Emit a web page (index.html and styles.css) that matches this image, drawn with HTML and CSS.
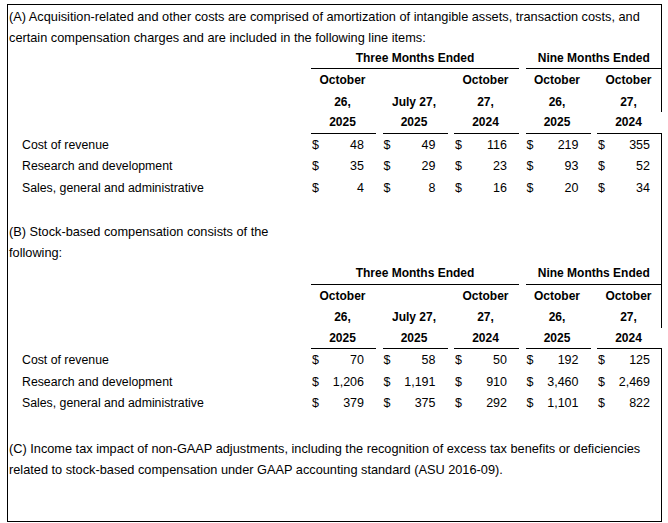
FILE: index.html
```html
<!DOCTYPE html>
<html lang="en">
<head>
<meta charset="utf-8">
<title>Non-GAAP notes</title>
<link rel="stylesheet" href="styles.css">
</head>
<body>
<div class="page">
  <div class="box">
    <p class="note note-a">(A) Acquisition-related and other costs are comprised of amortization of intangible assets, transaction costs, and<br>certain compensation charges and are included in the following line items:</p>

    <div class="fin">
      <div class="lbl"></div>
      <div class="period span3">Three Months Ended</div>
      <div class="period span2">Nine Months Ended</div>

      <div class="lbl"></div>
      <div class="hd">October</div><div class="hd"></div><div class="hd">October</div><div class="hd">October</div><div class="hd">October</div>
      <div class="lbl"></div>
      <div class="hd">26,</div><div class="hd">July 27,</div><div class="hd">27,</div><div class="hd">26,</div><div class="hd">27,</div>
      <div class="lbl"></div>
      <div class="hd yr">2025</div><div class="hd yr">2025</div><div class="hd yr">2024</div><div class="hd yr">2025</div><div class="hd yr last">2024</div>

      <div class="lbl item">Cost of revenue</div>
      <div class="v"><span>$</span><span>48</span></div><div class="v"><span>$</span><span>49</span></div><div class="v"><span>$</span><span>116</span></div><div class="v"><span>$</span><span>219</span></div><div class="v"><span>$</span><span>355</span></div>
      <div class="lbl item">Research and development</div>
      <div class="v"><span>$</span><span>35</span></div><div class="v"><span>$</span><span>29</span></div><div class="v"><span>$</span><span>23</span></div><div class="v"><span>$</span><span>93</span></div><div class="v"><span>$</span><span>52</span></div>
      <div class="lbl item">Sales, general and administrative</div>
      <div class="v"><span>$</span><span>4</span></div><div class="v"><span>$</span><span>8</span></div><div class="v"><span>$</span><span>16</span></div><div class="v"><span>$</span><span>20</span></div><div class="v"><span>$</span><span>34</span></div>
    </div>

    <p class="note note-b">(B) Stock-based compensation consists of the<br>following:</p>

    <div class="fin">
      <div class="lbl"></div>
      <div class="period span3">Three Months Ended</div>
      <div class="period span2">Nine Months Ended</div>

      <div class="lbl"></div>
      <div class="hd">October</div><div class="hd"></div><div class="hd">October</div><div class="hd">October</div><div class="hd">October</div>
      <div class="lbl"></div>
      <div class="hd">26,</div><div class="hd">July 27,</div><div class="hd">27,</div><div class="hd">26,</div><div class="hd">27,</div>
      <div class="lbl"></div>
      <div class="hd yr">2025</div><div class="hd yr">2025</div><div class="hd yr">2024</div><div class="hd yr">2025</div><div class="hd yr last">2024</div>

      <div class="lbl item">Cost of revenue</div>
      <div class="v"><span>$</span><span>70</span></div><div class="v"><span>$</span><span>58</span></div><div class="v"><span>$</span><span>50</span></div><div class="v"><span>$</span><span>192</span></div><div class="v"><span>$</span><span>125</span></div>
      <div class="lbl item">Research and development</div>
      <div class="v"><span>$</span><span>1,206</span></div><div class="v"><span>$</span><span>1,191</span></div><div class="v"><span>$</span><span>910</span></div><div class="v"><span>$</span><span>3,460</span></div><div class="v"><span>$</span><span>2,469</span></div>
      <div class="lbl item">Sales, general and administrative</div>
      <div class="v"><span>$</span><span>379</span></div><div class="v"><span>$</span><span>375</span></div><div class="v"><span>$</span><span>292</span></div><div class="v"><span>$</span><span>1,101</span></div><div class="v"><span>$</span><span>822</span></div>
    </div>

    <p class="note note-c">(C) Income tax impact of non-GAAP adjustments, including the recognition of excess tax benefits or deficiencies<br>related to stock-based compensation under GAAP accounting standard (ASU 2016-09).</p>
  </div>
</div>
</body>
</html>
```

FILE: styles.css
```css
*, *::before, *::after {
  box-sizing: border-box;
}

html, body {
  margin: 0;
  padding: 0;
  background: #fff;
}

body {
  font-family: "Liberation Sans", Arial, sans-serif;
  font-size: 12.5px;
  color: #000;
}

.page {
  padding: 4px 6px 0 7px;
}

.box {
  height: 518px;
  border: 1px solid #000;
  padding: 0;
}

.note {
  margin: 0;
  padding: 0.5px 0 0 1px;
  font-size: 12.75px;
  line-height: 21px;
  white-space: nowrap;
}

.note-b {
  margin-top: 22.5px;
}

.note-c {
  margin-top: 23.5px;
}

.fin {
  display: grid;
  grid-template-columns: 1fr 65px 65px 65px 65px 65px;
  grid-auto-rows: 21.5px;
  column-gap: 6.5px;
  margin-right: -1px;
  line-height: 20.5px;
}

.fin > div {
  padding-top: 1px;
}

.period {
  font-weight: bold;
  font-size: 12px;
  text-align: center;
  border-bottom: 1px solid #000;
  line-height: 19.5px;
}

.span3 { grid-column: span 3; }
.span2 { grid-column: span 2; }

.hd {
  font-weight: bold;
  font-size: 12px;
  text-align: center;
  padding-right: 2px;
}

.yr {
  border-bottom: 1px solid #000;
  line-height: 19.5px;
}

.last {
  background: #fff;
}

.item {
  padding-left: 14px;
  font-size: 12.3px;
}

.v {
  display: flex;
  justify-content: space-between;
  padding-right: 12px;
  padding-left: 1px;
}
```
